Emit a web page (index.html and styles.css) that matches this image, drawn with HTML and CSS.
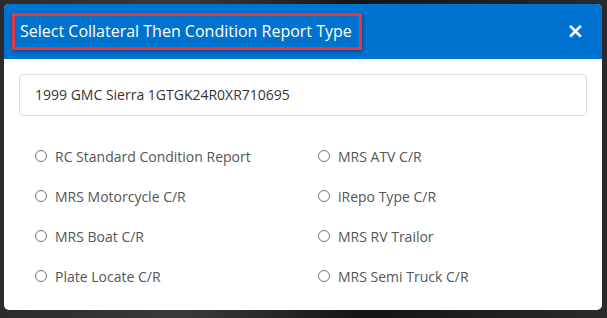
FILE: index.html
```html
<!DOCTYPE html>
<html lang="en">
<head>
	<meta charset="UTF-8">
	<title>Condition Report</title>
	<link rel="stylesheet" href="styles.css">
</head>
<body>
	<div class="backdrop">
		<div class="modal">
			<div class="modal-header">
				<h4 class="modal-title">Select Collateral Then Condition Report Type</h4>
				<button class="close">&times;</button>
			</div>
			<div class="modal-body">
				<div class="collateral">1999 GMC Sierra 1GTGK24R0XR710695</div>

				<div class="types">
					<label class="opt"><input type="radio" name="crtype"> RC Standard Condition Report</label>
					<label class="opt"><input type="radio" name="crtype"> MRS ATV C/R</label>
					<label class="opt"><input type="radio" name="crtype"> MRS Motorcycle C/R</label>
					<label class="opt"><input type="radio" name="crtype"> iRepo Type C/R</label>
					<label class="opt"><input type="radio" name="crtype"> MRS Boat C/R</label>
					<label class="opt"><input type="radio" name="crtype"> MRS RV Trailor</label>
					<label class="opt"><input type="radio" name="crtype"> Plate Locate C/R</label>
					<label class="opt"><input type="radio" name="crtype"> MRS Semi Truck C/R</label>
				</div>
			</div>
		</div>
	</div>
</body>
</html>
```
FILE: styles.css
```css
html, body {
	margin: 0;
	padding: 0;
}

body {
	font-family: "Open Sans", "Liberation Sans", sans-serif;
	background: #1a1a1c;
	width: 607px;
	height: 318px;
	overflow: hidden;
}

.backdrop {
	height: 318px;
	padding: 4px 5px 0 4px;
	box-sizing: border-box;
	background:
		linear-gradient(90deg, #2b2b2e 0%, #3a3a3c 30%, #141416 60%, #2a2a2c 100%);
}

.modal {
	background: #fff;
	border-radius: 5px;
	overflow: hidden;
	height: 306px;
}

.modal-header {
	background: #0073d0;
	height: 55px;
	display: flex;
	align-items: center;
	padding: 0 18px 0 8px;
}

.modal-title {
	margin: 0;
	color: #fff;
	font-size: 16px;
	font-weight: normal;
	border: 3px solid #ea3540;
	padding: 5px 7px 5px 5px;
	box-shadow: 1px 2px 4px rgba(0, 0, 0, 0.35);
	line-height: 21px;
}

.close {
	margin-left: auto;
	background: none;
	border: none;
	color: #fff;
	font-size: 21px;
	font-weight: bold;
	font-family: "DejaVu Sans", sans-serif;
	padding: 0;
	line-height: 1;
	cursor: pointer;
}

.modal-body {
	padding: 15px 15px 0 15px;
}

.collateral {
	border: 1px solid #dcdcdc;
	border-radius: 4px;
	height: 40px;
	line-height: 40px;
	padding-left: 15px;
	font-size: 14px;
	color: #333;
}

.types {
	display: grid;
	grid-template-columns: 283px 1fr;
	row-gap: 20px;
	padding: 30px 0 0 16px;
}

.opt {
	display: flex;
	align-items: center;
	font-size: 14px;
	color: #555;
	height: 20px;
}

.opt input {
	appearance: none;
	-webkit-appearance: none;
	flex: none;
	box-sizing: border-box;
	margin: 0 8px 0 0;
	width: 12px;
	height: 12px;
	border: 1px solid #777;
	border-radius: 50%;
	background: #fff;
}
```
